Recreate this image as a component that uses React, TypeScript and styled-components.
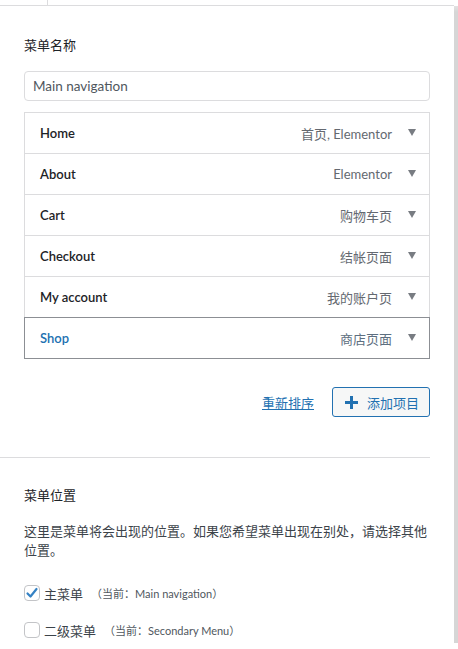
import React from "react";
import styled, { createGlobalStyle, css } from "styled-components";

const GlobalStyle = createGlobalStyle`
  html, body { margin: 0; padding: 0; background: #fff; }
  body {
    font-family: "Lato", "Noto Sans CJK SC", sans-serif;
    font-size: 13px;
    color: #1d2327;
  }
  * { box-sizing: border-box; }
`;

const FONT = `"Lato", "Noto Sans CJK SC", sans-serif`;

const Frame = styled.div`
  width: 458px;
  height: 649px;
  overflow: hidden;
  display: flex;
  flex-direction: column;
  background: #fff;
`;

const TopStrip = styled.div`
  height: 6px;
  display: flex;
  border-bottom: 1px solid #dcdcde;
  margin-right: 4px;
`;

const TopTab = styled.div`
  width: 48px;
  border-right: 1px solid #dcdcde;
`;

const Body = styled.div`
  flex: 1;
  display: flex;
  min-height: 0;
`;

const Panel = styled.div`
  flex: 1;
  min-width: 0;
  padding: 29px 24px 0 24px;
  display: flex;
  flex-direction: column;
`;

const ScrollEdge = styled.div`
  width: 4px;
  background: linear-gradient(to bottom, #e2e2e2 0px, #d6d6d6 6px, #d6d6d6 100%);
  margin-bottom: 6px;
`;

const Label = styled.div`
  font-size: 13px;
  line-height: 20px;
  color: #1d2327;
`;

const NameInput = styled.div`
  margin-top: 16px;
  height: 30px;
  border: 1px solid #dcdcde;
  border-radius: 4px;
  padding: 0 8px;
  display: flex;
  align-items: center;
  color: #50575e;
  font-size: 13.5px;
`;

const ItemList = styled.div`
  margin-top: 11px;
  display: flex;
  flex-direction: column;
`;

const Item = styled.div<{ $active?: boolean }>`
  position: relative;
  height: 42px;
  margin-top: -1px;
  &:first-child { margin-top: 0; }
  border: 1px solid #dcdcde;
  display: flex;
  align-items: center;
  padding: 0 13px 0 15px;
  ${(p) =>
    p.$active &&
    css`
      border-color: #8c8f94;
      z-index: 1;
    `}
`;

const ItemTitle = styled.span<{ $active?: boolean }>`
  flex: 1;
  font-weight: 600;
  font-size: 13px;
  color: ${(p) => (p.$active ? "#2271b1" : "#1d2327")};
`;

const ItemType = styled.span<{ $active?: boolean }>`
  font-size: 13px;
  color: ${(p) => (p.$active ? "#5d6f80" : "#646970")};
  margin-right: 16px;
`;

const Arrow = styled.span`
  width: 0;
  height: 0;
  border-left: 4px solid transparent;
  border-right: 4px solid transparent;
  border-top: 7px solid #787c82;
  margin-top: -2px;
`;

const Actions = styled.div`
  margin-top: 28px;
  display: flex;
  justify-content: flex-end;
  align-items: center;
  gap: 18px;
`;

const Reorder = styled.a`
  color: #2271b1;
  text-decoration: underline;
  font-size: 13px;
  cursor: pointer;
`;

const AddButton = styled.button`
  height: 30px;
  width: 98px;
  border: 1px solid #2271b1;
  border-radius: 3px;
  background: #f6f7f7;
  color: #2271b1;
  font-family: ${FONT};
  font-size: 13px;
  display: flex;
  align-items: center;
  justify-content: center;
  gap: 9px;
  padding: 0 0 0 2px;
`;

const Divider = styled.div`
  margin: 40px 0 0 -24px;
  border-top: 1px solid #dcdcde;
`;

const SectionTitle = styled(Label)`
  margin-top: 27px;
`;

const Description = styled.p`
  margin: 17px 0 0 0;
  font-size: 13px;
  line-height: 19px;
  color: #3c434a;
`;

const CheckRow = styled.label<{ $first?: boolean }>`
  display: flex;
  align-items: center;
  gap: 4px;
  margin-top: ${(p) => (p.$first ? "25px" : "21px")};
  height: 16px;
`;

const Box = styled.span`
  width: 16px;
  height: 16px;
  border: 1px solid #c3c4c7;
  border-radius: 4px;
  background: #fff;
  display: flex;
  align-items: center;
  justify-content: center;
`;

const CheckText = styled.span`
  font-size: 13px;
  color: #3c434a;
`;

const Current = styled.span`
  font-size: 11px;
  color: #50575e;
  margin-left: 4px;
`;

const items = [
  { title: "Home", type: "首页, Elementor" },
  { title: "About", type: "Elementor" },
  { title: "Cart", type: "购物车页" },
  { title: "Checkout", type: "结帐页面" },
  { title: "My account", type: "我的账户页" },
  { title: "Shop", type: "商店页面", active: true },
];

export default function App() {
  return (
    <Frame>
      <GlobalStyle />
      <TopStrip>
        <TopTab />
      </TopStrip>
      <Body>
        <Panel>
          <Label>菜单名称</Label>
          <NameInput>Main navigation</NameInput>
          <ItemList>
            {items.map((it) => (
              <Item key={it.title} $active={it.active}>
                <ItemTitle $active={it.active}>{it.title}</ItemTitle>
                <ItemType $active={it.active}>{it.type}</ItemType>
                <Arrow />
              </Item>
            ))}
          </ItemList>
          <Actions>
            <Reorder>重新排序</Reorder>
            <AddButton>
              <svg width="13" height="13" viewBox="0 0 13 13">
                <rect x="5" y="0" width="3" height="13" fill="#2271b1" />
                <rect x="0" y="5" width="13" height="3" fill="#2271b1" />
              </svg>
              添加项目
            </AddButton>
          </Actions>
          <Divider />
          <SectionTitle>菜单位置</SectionTitle>
          <Description>
            这里是菜单将会出现的位置。如果您希望菜单出现在别处，请选择其他位置。
          </Description>
          <CheckRow $first>
            <Box>
              <svg width="14" height="14" viewBox="0 0 14 14">
                <path d="M2.5 7.5 L5.5 10.5 L11.5 3" fill="none" stroke="#3582c4" strokeWidth="2.2" strokeLinecap="round" strokeLinejoin="round" />
              </svg>
            </Box>
            <CheckText>主菜单</CheckText>
            <Current>（当前：Main navigation）</Current>
          </CheckRow>
          <CheckRow>
            <Box />
            <CheckText>二级菜单</CheckText>
            <Current>（当前：Secondary Menu）</Current>
          </CheckRow>
        </Panel>
        <ScrollEdge />
      </Body>
    </Frame>
  );
}
